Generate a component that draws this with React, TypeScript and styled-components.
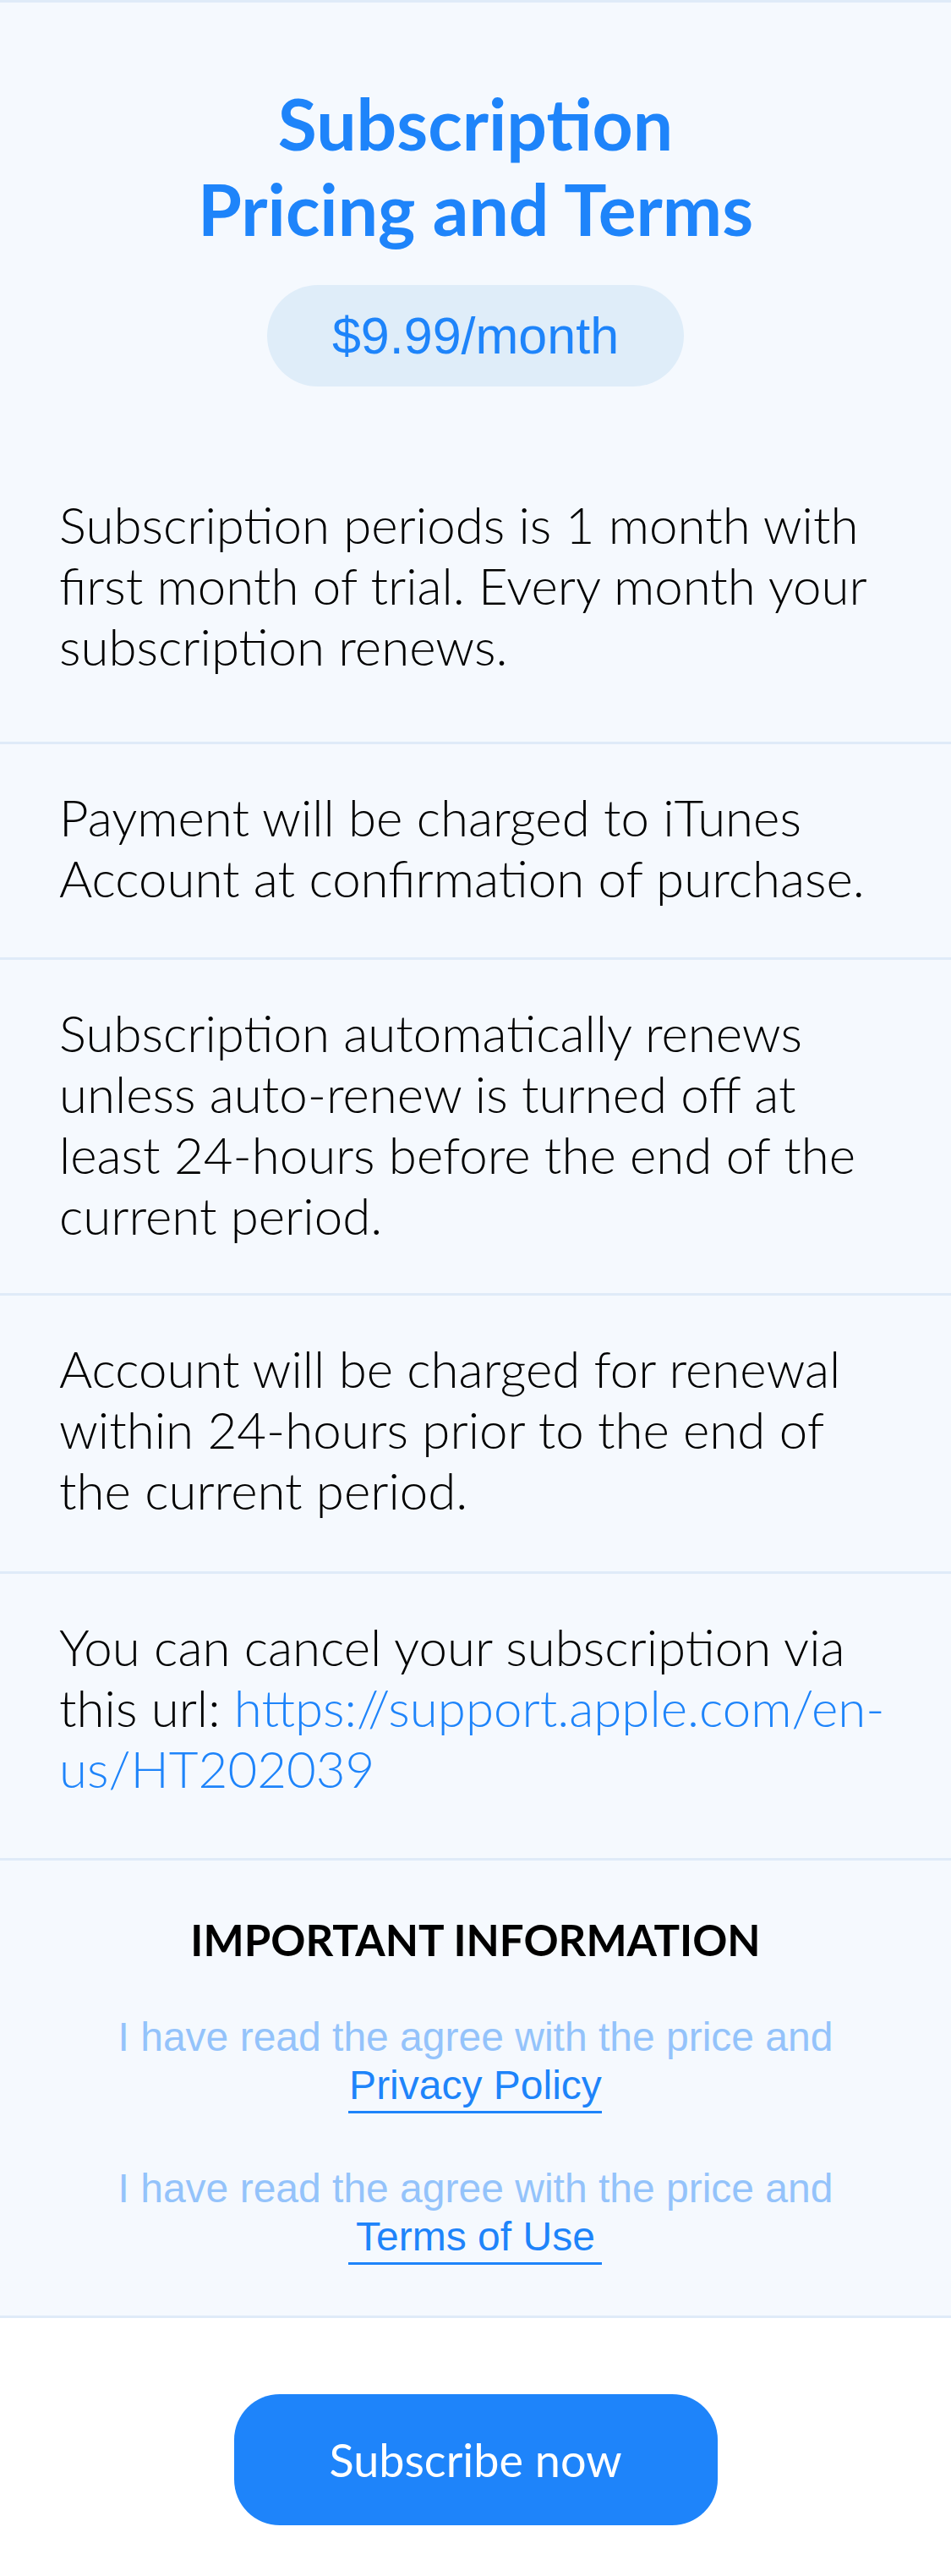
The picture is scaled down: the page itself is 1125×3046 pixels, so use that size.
import React from "react";
import styled, { createGlobalStyle } from "styled-components";

const GlobalStyle = createGlobalStyle`
  html, body {
    margin: 0;
    padding: 0;
    background: #ffffff;
  }
  body {
    font-family: Lato, "Open Sans", sans-serif;
    -webkit-font-smoothing: antialiased;
  }
  * { box-sizing: border-box; }
`;

const BLUE = "#1e84fa";
const LINE = "#dfebf8";

const Page = styled.div`
  display: flex;
  flex-direction: column;
  width: 100%;
`;

const Sheet = styled.main`
  display: flex;
  flex-direction: column;
  background: #f5f9fe;
  border-top: 3px solid ${LINE};
  border-bottom: 3px solid ${LINE};
`;

const Header = styled.header`
  display: flex;
  flex-direction: column;
  align-items: center;
  padding-top: 92px;
`;

const Title = styled.h1`
  margin: 0;
  font-family: Lato, sans-serif;
  font-weight: 700;
  font-size: 84px;
  line-height: 101px;
  color: ${BLUE};
  text-align: center;
`;

const PricePill = styled.div`
  margin-top: 40px;
  height: 120px;
  padding: 0 77px;
  border-radius: 60px;
  background: #dfedf9;
  display: flex;
  align-items: center;
  justify-content: center;
  font-family: "Liberation Sans", Arial, sans-serif;
  font-size: 61px;
  color: ${BLUE};
`;

const Section = styled.section<{ $top: number; $bottom: number; $divider?: boolean }>`
  padding: ${(p) => p.$top}px 70px ${(p) => p.$bottom}px;
  border-bottom: ${(p) => (p.$divider ? `3px solid ${LINE}` : "none")};
`;

const BodyText = styled.p`
  margin: 0;
  font-family: Lato, sans-serif;
  font-weight: 300;
  font-size: 60px;
  line-height: 72px;
  color: #000;
`;

const UrlLink = styled.a`
  color: ${BLUE};
  text-decoration: none;
`;

const InfoSection = styled.section`
  display: flex;
  flex-direction: column;
  align-items: center;
  padding: 64px 40px 60px;
`;

const InfoHeading = styled.h2`
  margin: 0 0 56px;
  font-family: Lato, sans-serif;
  font-weight: 700;
  font-size: 51px;
  line-height: 60px;
  color: #000;
  text-transform: uppercase;
`;

const AgreeGroup = styled.div<{ $gap?: number }>`
  display: flex;
  flex-direction: column;
  align-items: center;
  margin-top: ${(p) => p.$gap ?? 0}px;
`;

const AgreeText = styled.span`
  font-family: "Liberation Sans", Arial, sans-serif;
  font-size: 48px;
  line-height: 57px;
  color: #94c3fb;
  text-align: center;
`;

const PolicyLink = styled.a`
  display: block;
  width: 300px;
  font-family: "Liberation Sans", Arial, sans-serif;
  font-size: 48px;
  line-height: 57px;
  color: ${BLUE};
  text-align: center;
  text-decoration: none;
  padding-bottom: 2px;
  border-bottom: 3px solid ${BLUE};
`;

const Footer = styled.footer`
  display: flex;
  justify-content: center;
  padding: 90px 0 58px;
  background: #ffffff;
`;

const SubscribeButton = styled.button`
  width: 572px;
  height: 155px;
  border: none;
  border-radius: 54px;
  background: ${BLUE};
  color: #ffffff;
  font-family: Lato, sans-serif;
  font-weight: 400;
  font-size: 54px;
  cursor: pointer;
`;

const terms = [
  { text: "Payment will be charged to iTunes Account at confirmation of purchase.", bottom: 58 },
  {
    text: "Subscription automatically renews unless auto-renew is turned off at least 24-hours before the end of the current period.",
    bottom: 56,
  },
  { text: "Account will be charged for renewal within 24-hours prior to the end of the current period.", bottom: 60 },
];

export default function App() {
  return (
    <Page>
      <GlobalStyle />
      <Sheet>
        <Header>
          <Title>
            Subscription
            <br />
            Pricing and Terms
          </Title>
          <PricePill>$9.99/month</PricePill>
        </Header>

        <Section $top={127} $bottom={77} $divider>
          <BodyText>
            Subscription periods is 1 month with first month of trial. Every month your subscription renews.
          </BodyText>
        </Section>

        {terms.map((t) => (
          <Section key={t.text} $top={50} $bottom={t.bottom} $divider>
            <BodyText>{t.text}</BodyText>
          </Section>
        ))}

        <Section $top={50} $bottom={70} $divider>
          <BodyText>
            You can cancel your subscription via this url:{" "}
            <UrlLink href="#">https://support.apple.com/en-us/HT202039</UrlLink>
          </BodyText>
        </Section>

        <InfoSection>
          <InfoHeading>Important Information</InfoHeading>
          <AgreeGroup>
            <AgreeText>I have read the agree with the price and</AgreeText>
            <PolicyLink href="#">Privacy Policy</PolicyLink>
          </AgreeGroup>
          <AgreeGroup $gap={60}>
            <AgreeText>I have read the agree with the price and</AgreeText>
            <PolicyLink href="#">Terms of Use</PolicyLink>
          </AgreeGroup>
        </InfoSection>
      </Sheet>
      <Footer>
        <SubscribeButton>Subscribe now</SubscribeButton>
      </Footer>
    </Page>
  );
}
